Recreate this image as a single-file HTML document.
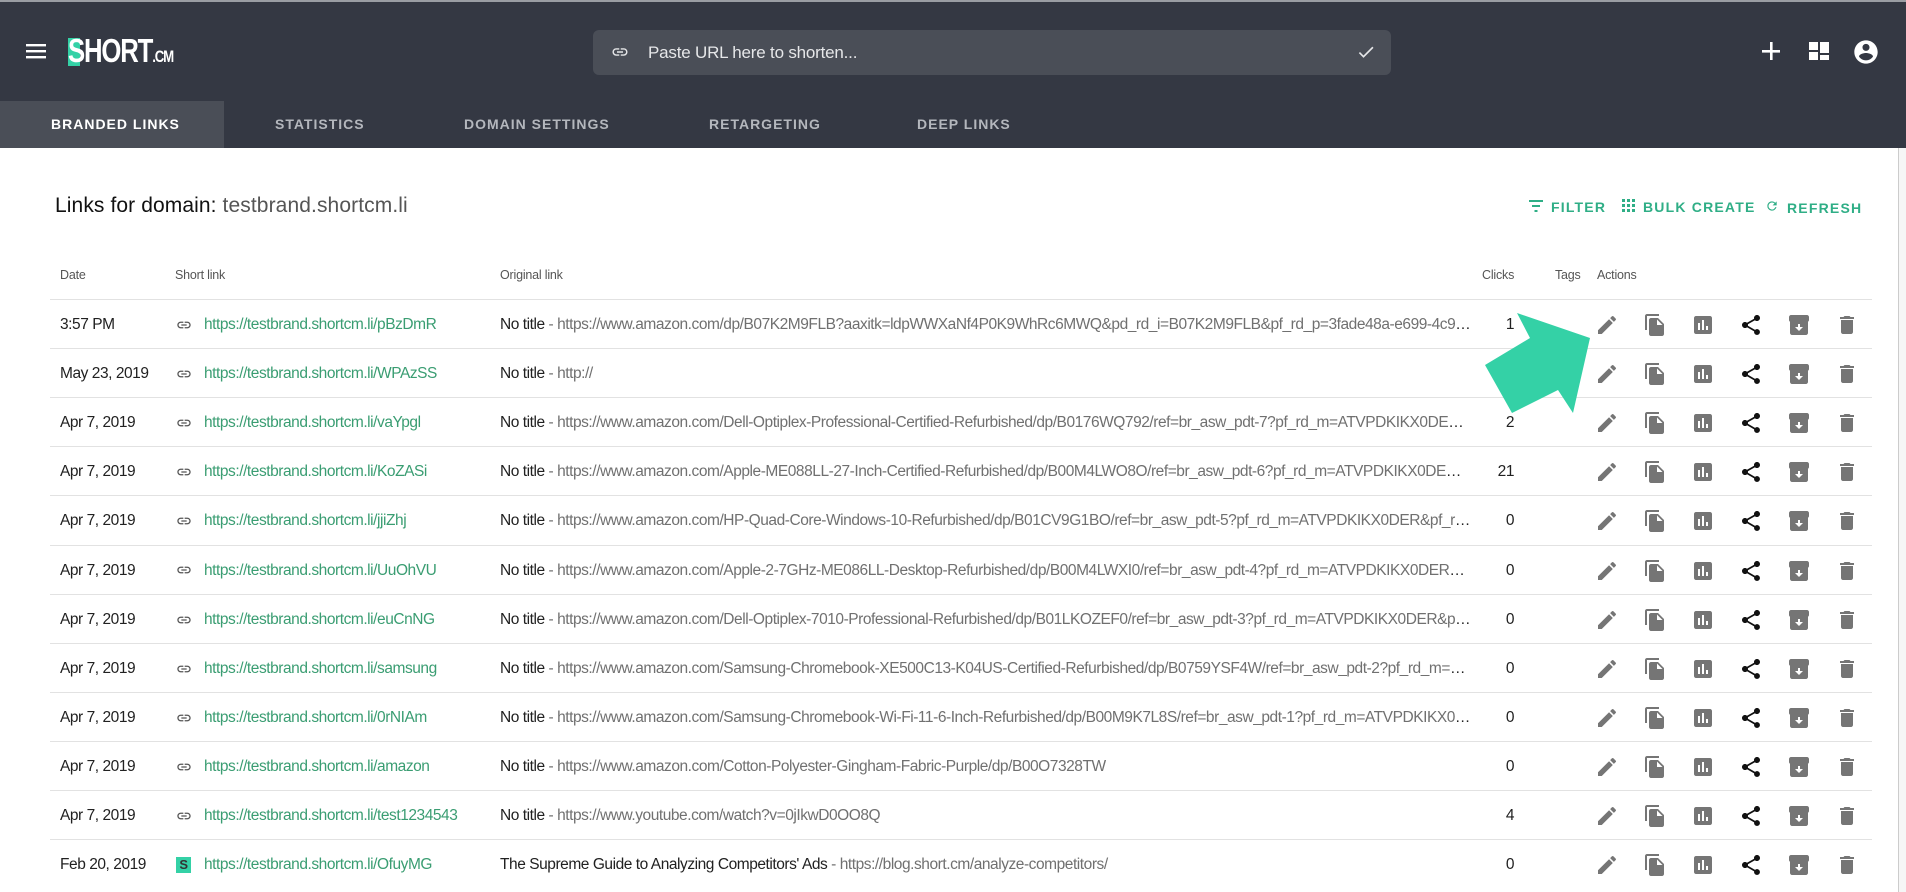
<!DOCTYPE html>
<html><head><meta charset="utf-8"><style>
*{box-sizing:border-box;margin:0;padding:0}
body{width:1906px;height:892px;overflow:hidden;background:#fff;font-family:"Liberation Sans Narrow","Liberation Sans",sans-serif;color:#212121;position:relative}
.top{position:absolute;left:0;top:0;width:1906px;height:148px;background:#343843;border-top:2px solid #9a9da3}
.tab{position:absolute;top:101px;height:47px;line-height:47px;font-family:"Liberation Sans",sans-serif;font-weight:bold;font-size:14px;letter-spacing:1px;color:#b4b7bd}
.search{position:absolute;left:593px;top:28px;width:798px;height:45px;background:#4a4e57;border-radius:6px;color:#e6e7e9;font-size:17px;letter-spacing:-0.2px;line-height:45px;padding-left:55px}
.ttl{position:absolute;left:55px;top:194px;font-size:21px;letter-spacing:0.1px;color:#111}
.ttl span{color:#555}
.btn{position:absolute;top:199px;color:#2fae86;font-family:"Liberation Sans",sans-serif;font-weight:bold;font-size:14px;letter-spacing:1.2px}
.th{position:absolute;top:268px;font-size:12.5px;color:#555;letter-spacing:-0.2px}
.row{position:absolute;left:50px;width:1822px;height:49px;border-top:1px solid #e2e2e2;font-size:15.5px;letter-spacing:-0.45px;line-height:49px}
.row div{position:absolute;top:0;white-space:nowrap}
.g{color:#3a9d72}.u{color:#707070}
.act svg{position:absolute;top:13px}
</style></head><body>
<div class="top">
<svg style="position:absolute;left:26px;top:41px" width="20" height="16"><rect y="1" width="20" height="2.4" fill="#fff"/><rect y="7" width="20" height="2.4" fill="#fff"/><rect y="13" width="20" height="2.4" fill="#fff"/></svg>
<div style="position:absolute;left:68px;top:36px;width:12px;height:28px;background:#34d1a6"></div>
<div style="position:absolute;left:68px;top:30px;font-family:'Liberation Sans',sans-serif;font-weight:bold;font-size:33px;color:#fff;letter-spacing:-1.5px;transform:scaleX(0.78);transform-origin:left">SHORT<span style="font-size:17px">.CM</span></div>
<div class="search"><svg style="position:absolute;left:16px;top:13px" width="22" height="18" viewBox="0 0 24 24"><path d="M3.9 12c0-1.7 1.4-3.1 3.1-3.1h4V7H7c-2.8 0-5 2.2-5 5s2.2 5 5 5h4v-1.9H7c-1.7 0-3.1-1.4-3.1-3.1zM8 13h8v-2H8v2zm9-6h-4v1.9h4c1.7 0 3.1 1.4 3.1 3.1s-1.4 3.1-3.1 3.1h-4V17h4c2.8 0 5-2.2 5-5s-2.2-5-5-5z" fill="#e6e7e9"/></svg>Paste URL here to shorten...
<svg style="position:absolute;right:14px;top:12px" width="22" height="20" viewBox="0 0 24 24"><path d="M9 16.2L4.8 12l-1.4 1.4L9 19 21 7l-1.4-1.4z" fill="#e6e7e9"/></svg></div>
<svg style="position:absolute;left:1762px;top:40px" width="18" height="18"><rect x="8" width="2.6" height="18" fill="#fff"/><rect y="8" width="18" height="2.6" fill="#fff"/></svg>
<svg style="position:absolute;left:1809px;top:40px" width="20" height="18"><rect width="9" height="8" fill="#fff"/><rect x="11" width="9" height="11" fill="#fff"/><rect y="10" width="9" height="8" fill="#fff"/><rect x="11" y="13" width="9" height="5" fill="#fff"/></svg>
<svg style="position:absolute;left:1852px;top:36px" width="28" height="28" viewBox="0 0 24 24"><path d="M12 2C6.48 2 2 6.48 2 12s4.48 10 10 10 10-4.48 10-10S17.520 2 12 2zm0 3c1.66 0 3 1.34 3 3s-1.34 3-3 3-3-1.34-3-3 1.34-3 3-3zm0 14.2c-2.5 0-4.71-1.28-6-3.22.03-1.99 4-3.08 6-3.08 1.99 0 5.97 1.09 6 3.08-1.29 1.94-3.5 3.22-6 3.22z" fill="#fff"/></svg>
<div style="position:absolute;left:0;top:99px;width:224px;height:47px;background:#4a4e57"></div>
<div class="tab" style="left:51px;top:99px;color:#fff">BRANDED LINKS</div>
<div class="tab" style="left:275px;top:99px">STATISTICS</div>
<div class="tab" style="left:464px;top:99px">DOMAIN SETTINGS</div>
<div class="tab" style="left:709px;top:99px">RETARGETING</div>
<div class="tab" style="left:917px;top:99px">DEEP LINKS</div>
</div>
<div style="position:absolute;right:0;top:148px;width:8px;height:744px;border-left:1px solid #ccc;background:#f6f6f6"></div>
<div class="ttl">Links for domain: <span>testbrand.shortcm.li</span></div>
<div class="btn" style="left:1529px"><svg width="14" height="12" style="margin-right:8px"><rect width="14" height="2" fill="#2fae86"/><rect x="3" y="5" width="8" height="2" fill="#2fae86"/><rect x="5.5" y="10" width="3" height="2" fill="#2fae86"/></svg>FILTER</div>
<div class="btn" style="left:1622px"><svg width="13" height="13" style="margin-right:8px" viewBox="0 0 13 13"><path d="M0 0h3v3H0zM5 0h3v3H5zM10 0h3v3h-3zM0 5h3v3H0zM5 5h3v3H5zM10 5h3v3h-3zM0 10h3v3H0zM5 10h3v3H5zM10 10h3v3h-3z" fill="#2fae86"/></svg>BULK CREATE</div>
<div class="btn" style="left:1765px"><svg width="14" height="14" style="margin-right:8px" viewBox="0 0 24 24"><path d="M17.65 6.35A7.96 7.96 0 0 0 12 4a8 8 0 1 0 7.73 10h-2.08A6 6 0 1 1 12 6c1.66 0 3.14.69 4.22 1.78L13 11h7V4l-2.35 2.35z" fill="#2fae86"/></svg>REFRESH</div>
<div class="th" style="left:60px">Date</div>
<div class="th" style="left:175px">Short link</div>
<div class="th" style="left:500px">Original link</div>
<div class="th" style="left:1482px">Clicks</div>
<div class="th" style="left:1555px">Tags</div>
<div class="th" style="left:1597px">Actions</div>
<div id="rows"></div>
<svg style="position:absolute;left:0;top:0" width="1906" height="892"><polygon points="1517,313 1590,338 1573,413 1558,390 1512,413 1485,365 1530,338" fill="#34d1a6"/></svg>
<script>
var d=[["3:57 PM","pBzDmR","No title","https://www.amazon.com/dp/B07K2M9FLB?aaxitk=ldpWWXaNf4P0K9WhRc6MWQ&pd_rd_i=B07K2M9FLB&pf_rd_p=3fade48a-e699-4c96-bf08-bb0000","1"],
["May 23, 2019","WPAzSS","No title","http://",""],
["Apr 7, 2019","vaYpgl","No title","https://www.amazon.com/Dell-Optiplex-Professional-Certified-Refurbished/dp/B0176WQ792/ref=br_asw_pdt-7?pf_rd_m=ATVPDKIKX0DER&pf_rd_s=","2"],
["Apr 7, 2019","KoZASi","No title","https://www.amazon.com/Apple-ME088LL-27-Inch-Certified-Refurbished/dp/B00M4LWO8O/ref=br_asw_pdt-6?pf_rd_m=ATVPDKIKX0DER&pf_rd_s=","21"],
["Apr 7, 2019","jjiZhj","No title","https://www.amazon.com/HP-Quad-Core-Windows-10-Refurbished/dp/B01CV9G1BO/ref=br_asw_pdt-5?pf_rd_m=ATVPDKIKX0DER&pf_rd_s=&pf_rd","0"],
["Apr 7, 2019","UuOhVU","No title","https://www.amazon.com/Apple-2-7GHz-ME086LL-Desktop-Refurbished/dp/B00M4LWXI0/ref=br_asw_pdt-4?pf_rd_m=ATVPDKIKX0DER&pf_rd_s=&","0"],
["Apr 7, 2019","euCnNG","No title","https://www.amazon.com/Dell-Optiplex-7010-Professional-Refurbished/dp/B01LKOZEF0/ref=br_asw_pdt-3?pf_rd_m=ATVPDKIKX0DER&pf_rd_s=&pf","0"],
["Apr 7, 2019","samsung","No title","https://www.amazon.com/Samsung-Chromebook-XE500C13-K04US-Certified-Refurbished/dp/B0759YSF4W/ref=br_asw_pdt-2?pf_rd_m=ATVPDKIKX0","0"],
["Apr 7, 2019","0rNIAm","No title","https://www.amazon.com/Samsung-Chromebook-Wi-Fi-11-6-Inch-Refurbished/dp/B00M9K7L8S/ref=br_asw_pdt-1?pf_rd_m=ATVPDKIKX0DER&pf_","0"],
["Apr 7, 2019","amazon","No title","https://www.amazon.com/Cotton-Polyester-Gingham-Fabric-Purple/dp/B00O7328TW","0"],
["Apr 7, 2019","test1234543","No title","https://www.youtube.com/watch?v=0jIkwD0OO8Q","4"],
["Feb 20, 2019","OfuyMG","The Supreme Guide to Analyzing Competitors' Ads","https://blog.short.cm/analyze-competitors/","0"]];
var link='<svg width="16" height="16" viewBox="0 0 24 24" style="vertical-align:middle"><path d="M3.9 12c0-1.7 1.4-3.1 3.1-3.1h4V7H7c-2.8 0-5 2.2-5 5s2.2 5 5 5h4v-1.9H7c-1.7 0-3.1-1.4-3.1-3.1zM8 13h8v-2H8v2zm9-6h-4v1.9h4c1.7 0 3.1 1.4 3.1 3.1s-1.4 3.1-3.1 3.1h-4V17h4c2.8 0 5-2.2 5-5s-2.2-5-5-5z" fill="#555"/></svg>';
var logo='<span style="display:inline-block;width:15px;height:16px;background:#34d1a6;color:#333;font:bold 13px/16px Liberation Sans;text-align:center;vertical-align:middle">S</span>';
var ic=[['M3 17.25V21h3.75L17.81 9.94l-3.75-3.75L3 17.25zM20.71 7.04a1 1 0 0 0 0-1.41l-2.34-2.34a1 1 0 0 0-1.41 0l-1.83 1.83 3.75 3.75 1.83-1.83z','#757575'],
['M16 1H4c-1.1 0-2 .9-2 2v14h2V3h12V1zm-1 4l6 6v10c0 1.1-.9 2-2 2H8c-1.1 0-2-.9-2-2V7c0-1.1.9-2 2-2h7zm-1 7h5.5L14 6.5V12z','#757575'],
['M19 3H5c-1.1 0-2 .9-2 2v14c0 1.1.9 2 2 2h14c1.1 0 2-.9 2-2V5c0-1.1-.9-2-2-2zM9 17H7v-7h2v7zm4 0h-2V7h2v10zm4 0h-2v-4h2v4z','#757575'],
['M18 16.08c-.76 0-1.44.3-1.96.77L8.91 12.7c.05-.23.09-.46.09-.7s-.04-.47-.09-.7l7.05-4.11c.54.5 1.25.81 2.04.81 1.66 0 3-1.34 3-3s-1.34-3-3-3-3 1.34-3 3c0 .24.04.47.09.7L8.04 9.81C7.5 9.31 6.79 9 6 9c-1.66 0-3 1.34-3 3s1.34 3 3 3c.79 0 1.5-.31 2.04-.81l7.12 4.16c-.05.21-.08.43-.08.65 0 1.61 1.31 2.92 2.92 2.92s2.92-1.31 2.92-2.92-1.31-2.92-2.92-2.92z','#111'],
['M20 2H4c-1 0-2 .9-2 2v3.01c0 .72.43 1.34 1 1.69V20c0 1.1 1.1 2 2 2h14c.9 0 2-.9 2-2V8.7c.57-.35 1-.97 1-1.69V4c0-1.1-1-2-2-2zm-4 12l-4 4-4-4h3v-3h2v3h3z','#757575'],
['M6 19c0 1.1.9 2 2 2h8c1.1 0 2-.9 2-2V7H6v12zM19 4h-3.5l-1-1h-5l-1 1H5v2h14V4z','#757575']];
var xs=[1607,1655,1703,1751,1799,1847],h='';
d.forEach(function(r,i){
 var s='<div class="row" style="top:'+(299+i*49.1)+'px">';
 s+='<div style="left:10px">'+r[0]+'</div>';
 s+='<div style="left:126px">'+(i==11?logo:link)+'</div>';
 s+='<div class="g" style="left:154px">https://testbrand.shortcm.li/'+r[1]+'</div>';
 s+='<div style="left:450px;width:972px;overflow:hidden;text-overflow:ellipsis">'+r[2]+' <span class="u">- '+r[3]+'</span></div>';
 s+='<div style="left:1400px;width:64px;text-align:right">'+r[4]+'</div>';
 s+='<div class="act">';
 ic.forEach(function(c,j){s+='<svg style="left:'+(xs[j]-50-12)+'px" width="24" height="24" viewBox="0 0 24 24"><path d="'+c[0]+'" fill="'+c[1]+'"/></svg>'});
 s+='</div></div>';h+=s;});
document.getElementById('rows').innerHTML=h;
</script>
</body></html>
